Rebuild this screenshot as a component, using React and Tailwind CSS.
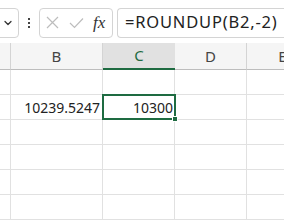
import { ChevronDown } from 'lucide-react'

const font = { fontFamily: '"Noto Sans", "Liberation Sans", sans-serif' }

function Cell({ w, children }) {
  return (
    <div className={`relative h-[25px] shrink-0 border-r border-b border-[#e1e1e1] ${w}`}>
      {children}
    </div>
  )
}

export default function App() {
  const cols = [
    { key: 'A', w: 'w-[11px]', label: '' },
    { key: 'B', w: 'w-[92px]', label: 'B' },
    { key: 'C', w: 'w-[72px]', label: 'C', sel: true },
    { key: 'D', w: 'w-[72px]', label: 'D' },
    { key: 'E', w: 'w-[72px]', label: 'E' },
  ]
  const rows = [0, 1, 2, 3, 4, 5]

  return (
    <div className="h-[224px] w-[284px] overflow-hidden bg-white text-[#262626]" style={font}>
      {/* formula bar */}
      <div className="flex h-[43px] items-center bg-white pt-[2px]">
        <div className="-ml-3 flex h-[30px] w-[31px] items-center justify-end rounded-[4px] border border-[#d4d4d4] pr-[4px]">
          <ChevronDown size={12} strokeWidth={2.5} className="text-[#333]" />
        </div>
        <div className="ml-[9px] flex w-[3px] flex-col gap-[2px]">
          <span className="h-[2px] w-[2px] bg-[#444]" />
          <span className="h-[2px] w-[2px] bg-[#444]" />
          <span className="h-[2px] w-[2px] bg-[#444]" />
        </div>
        <div className="ml-[8px] flex h-[30px] w-[74px] items-center rounded-[4px] border border-[#d4d4d4] pl-[6px]">
          <svg width="13" height="13" viewBox="0 0 13 13" className="text-[#bdbdbd]">
            <path d="M1 1 L12 12 M12 1 L1 12" stroke="currentColor" strokeWidth="1.2" fill="none" />
          </svg>
          <svg width="15" height="12" viewBox="0 0 15 12" className="ml-[10px] text-[#bdbdbd]">
            <path d="M1 6 L5.5 10.5 L14 1.5" stroke="currentColor" strokeWidth="1.2" fill="none" />
          </svg>
          <span
            className="ml-[9px] text-[17px] italic text-[#333]"
            style={{ fontFamily: '"Liberation Serif", serif' }}
          >
            fx
          </span>
        </div>
        <div className="ml-[4px] flex h-[30px] flex-1 items-center rounded-l-[4px] border border-r-0 border-[#d4d4d4] pl-[7px] text-[16.5px] tracking-[0.8px] whitespace-nowrap text-[#222]">
          =ROUNDUP(B2,-2)
        </div>
      </div>

      {/* column headers */}
      <div className="flex h-[27px]">
        {cols.map((c) => (
          <div
            key={c.key}
            className={`flex shrink-0 items-center justify-center text-[15px] ${c.w} ${
              c.sel
                ? 'border-b-2 border-b-[#1e6b41] bg-[#e1e1e1] text-[#1e6b41]'
                : 'border-r border-b border-[#d4d4d4] border-b-[#bdbdbd] bg-[#f5f5f5] text-[#444]'
            }`}
          >
            {c.label}
          </div>
        ))}
      </div>

      {/* grid */}
      {rows.map((r) => (
        <div key={r} className="flex">
          {cols.map((c) => (
            <Cell key={c.key} w={c.w}>
              {r === 1 && c.key === 'B' && (
                <div className="flex h-full items-center justify-end pr-[2px] text-[14px] text-[#222]">
                  10239.5247
                </div>
              )}
              {r === 1 && c.key === 'C' && (
                <div className="absolute -top-[1px] -left-[1px] z-10 flex h-[26px] w-[74px] items-center justify-end border-2 border-[#1e6b41] pr-[1px] text-[14px] text-[#222]">
                  10300
                  <span className="absolute -right-[4px] -bottom-[4px] h-[6px] w-[6px] border border-white bg-[#1e6b41]" />
                </div>
              )}
            </Cell>
          ))}
        </div>
      ))}
    </div>
  )
}
